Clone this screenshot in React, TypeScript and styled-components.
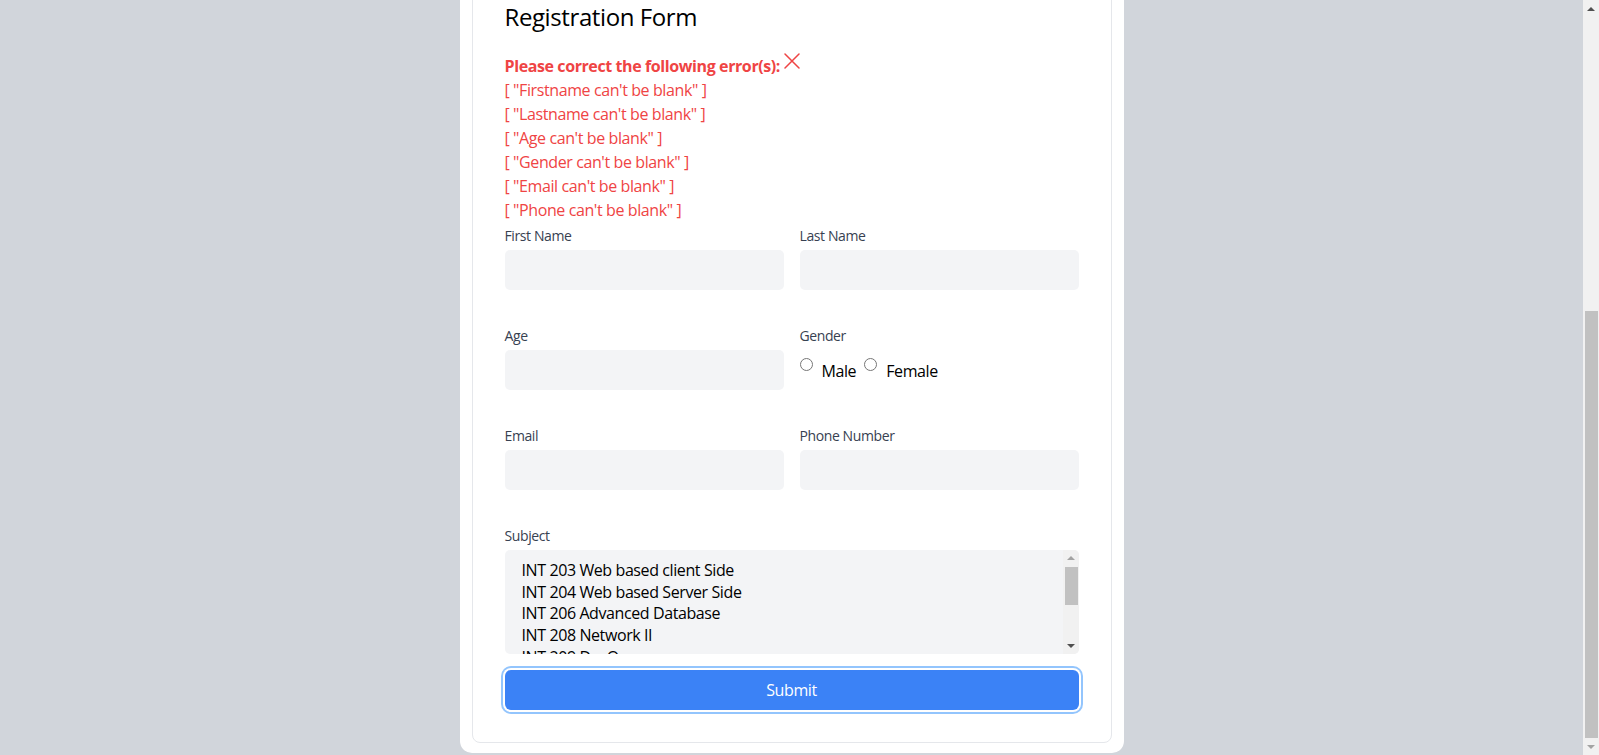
import React, { useLayoutEffect } from "react";
import styled, { createGlobalStyle } from "styled-components";

const GlobalStyle = createGlobalStyle`
  html {
    scrollbar-width: none;
  }
  html::-webkit-scrollbar { display: none; }
  html, body {
    margin: 0;
    padding: 0;
    background: #d1d5db;
    font-family: "Open Sans", "Noto Sans", sans-serif;
    letter-spacing: -0.025em;
  }
  *, *::before, *::after { box-sizing: border-box; }
`;

const Page = styled.div`
  display: flex;
  justify-content: center;
  padding: 476px 16px 2px 0;
`;

const OuterCard = styled.div`
  width: 664px;
  background: #ffffff;
  border-radius: 12px;
  padding: 12px 12px 10px;
`;

const InnerCard = styled.div`
  border: 1px solid #e5e7eb;
  border-radius: 8px;
  padding: 32px;
`;

const Title = styled.h1`
  margin: 0 0 21px;
  font-size: 24px;
  line-height: 32px;
  font-weight: 400;
  color: #000;
`;

const ErrorHeader = styled.div`
  display: flex;
  align-items: flex-start;
  color: #ef4444;
  font-size: 16px;
  line-height: 24px;
  font-weight: 700;
`;

const CloseIcon = styled.svg`
  width: 16px;
  height: 16px;
  margin: -1px 0 0 4px;
  flex: none;
`;

const ErrorLine = styled.div`
  color: #ef4444;
  font-size: 16px;
  line-height: 24px;
`;

const Form = styled.form`
  margin-top: 4px;
  display: grid;
  grid-template-columns: 1fr 1fr;
  column-gap: 16px;
  row-gap: 36px;
`;

const Field = styled.div<{ $full?: boolean }>`
  display: flex;
  flex-direction: column;
  grid-column: ${(p) => (p.$full ? "1 / -1" : "auto")};
`;

const Label = styled.label`
  display: block;
  font-size: 14px;
  line-height: 20px;
  color: #374151;
  margin-bottom: 4px;
`;

const Input = styled.input`
  height: 40px;
  border: none;
  border-radius: 5px;
  background: #f3f4f6;
  padding: 0 16px;
  font: inherit;
  outline: none;
`;

const RadioRow = styled.div`
  display: flex;
  align-items: flex-start;
  padding-top: 8px;
`;

const Radio = styled.input<{ $first?: boolean }>`
  width: 13px;
  height: 13px;
  margin: 0 0 0 ${(p) => (p.$first ? "0" : "8px")};
`;

const RadioText = styled.span`
  margin: 1px 0 0 9px;
  font-size: 16px;
  line-height: 24px;
  color: #000;
`;

/* Subject list box with its scrollbar */
const ListBox = styled.div`
  display: flex;
  height: 104px;
  border-radius: 5px;
  background: #f3f4f6;
  overflow: hidden;
`;

const OptionList = styled.div`
  flex: 1;
  overflow: hidden;
  padding: 10px 0 0 17px;
`;

const OptionItem = styled.div`
  font-size: 16px;
  line-height: 21.7px;
  color: #000;
  white-space: nowrap;
  cursor: default;
`;

const ScrollTrack = styled.div<{ $width: number }>`
  flex: none;
  width: ${(p) => p.$width}px;
  display: flex;
  flex-direction: column;
  background: #f1f1f1;
`;

const ArrowBox = styled.div<{ $height: number }>`
  flex: none;
  height: ${(p) => p.$height}px;
  display: flex;
  align-items: center;
  justify-content: center;
`;

const Triangle = styled.div<{ $down?: boolean; $active?: boolean }>`
  width: 0;
  height: 0;
  border-left: 4px solid transparent;
  border-right: 4px solid transparent;
  ${(p) =>
    p.$down
      ? `border-top: 4px solid ${p.$active ? "#505050" : "#a3a3a3"};`
      : `border-bottom: 4px solid ${p.$active ? "#505050" : "#a3a3a3"};`}
`;

const ThumbArea = styled.div`
  flex: 1;
  display: flex;
  flex-direction: column;
`;

const Thumb = styled.div`
  flex: none;
  margin: 0 1px 0 2px;
  background: #c1c1c1;
`;

const PageScrollbar = styled.div`
  position: fixed;
  top: 0;
  right: 0;
  bottom: 0;
  display: flex;
`;

const SubmitButton = styled.button`
  grid-column: 1 / -1;
  margin-top: -20px;
  height: 40px;
  border: none;
  border-radius: 6px;
  background: #3b82f6;
  color: #fff;
  font-family: inherit;
  font-size: 16px;
  letter-spacing: inherit;
  box-shadow: 0 0 0 2px #fff, 0 0 0 4px #93c5fd;
  cursor: pointer;
`;

const errors = [
  "Firstname can't be blank",
  "Lastname can't be blank",
  "Age can't be blank",
  "Gender can't be blank",
  "Email can't be blank",
  "Phone can't be blank",
];

const subjects = [
  "INT 203 Web based client Side",
  "INT 204 Web based Server Side",
  "INT 206 Advanced Database",
  "INT 208 Network II",
  "INT 209 DevOps",
];

type BarProps = {
  width: number;
  arrow: number;
  before: number;
  thumb: number;
  upActive: boolean;
  downActive: boolean;
};

function Scrollbar({ width, arrow, before, thumb, upActive, downActive }: BarProps) {
  return (
    <ScrollTrack $width={width}>
      <ArrowBox $height={arrow}>
        <Triangle $active={upActive} />
      </ArrowBox>
      <ThumbArea>
        <Thumb style={{ marginTop: before, height: thumb }} />
      </ThumbArea>
      <ArrowBox $height={arrow}>
        <Triangle $down $active={downActive} />
      </ArrowBox>
    </ScrollTrack>
  );
}

export default function App() {
  useLayoutEffect(() => {
    window.scrollTo(0, document.documentElement.scrollHeight);
  }, []);

  return (
    <>
      <GlobalStyle />
      <Page>
        <OuterCard>
          <InnerCard>
            <Title>Registration Form</Title>
            <ErrorHeader>
              <span>Please correct the following error(s):</span>
              <CloseIcon viewBox="0 0 16 16" fill="none" stroke="#ef4444" strokeWidth="1.5" strokeLinecap="round">
                <path d="M1 1L15 15M15 1L1 15" />
              </CloseIcon>
            </ErrorHeader>
            {errors.map((e) => (
              <ErrorLine key={e}>[ "{e}" ]</ErrorLine>
            ))}
            <Form onSubmit={(ev) => ev.preventDefault()}>
              <Field>
                <Label>First Name</Label>
                <Input type="text" />
              </Field>
              <Field>
                <Label>Last Name</Label>
                <Input type="text" />
              </Field>
              <Field>
                <Label>Age</Label>
                <Input type="number" />
              </Field>
              <Field>
                <Label>Gender</Label>
                <RadioRow>
                  <Radio type="radio" name="gender" $first />
                  <RadioText>Male</RadioText>
                  <Radio type="radio" name="gender" />
                  <RadioText>Female</RadioText>
                </RadioRow>
              </Field>
              <Field>
                <Label>Email</Label>
                <Input type="email" />
              </Field>
              <Field>
                <Label>Phone Number</Label>
                <Input type="tel" />
              </Field>
              <Field $full>
                <Label>Subject</Label>
                <ListBox role="listbox" aria-multiselectable="true">
                  <OptionList>
                    {subjects.map((s) => (
                      <OptionItem role="option" key={s}>
                        {s}
                      </OptionItem>
                    ))}
                  </OptionList>
                  <Scrollbar width={16} arrow={16} before={1} thumb={38} upActive={false} downActive />
                </ListBox>
              </Field>
              <SubmitButton type="submit">Submit</SubmitButton>
            </Form>
          </InnerCard>
        </OuterCard>
      </Page>
      <PageScrollbar>
        <Scrollbar width={16} arrow={17} before={294} thumb={427} upActive downActive={false} />
      </PageScrollbar>
    </>
  );
}
